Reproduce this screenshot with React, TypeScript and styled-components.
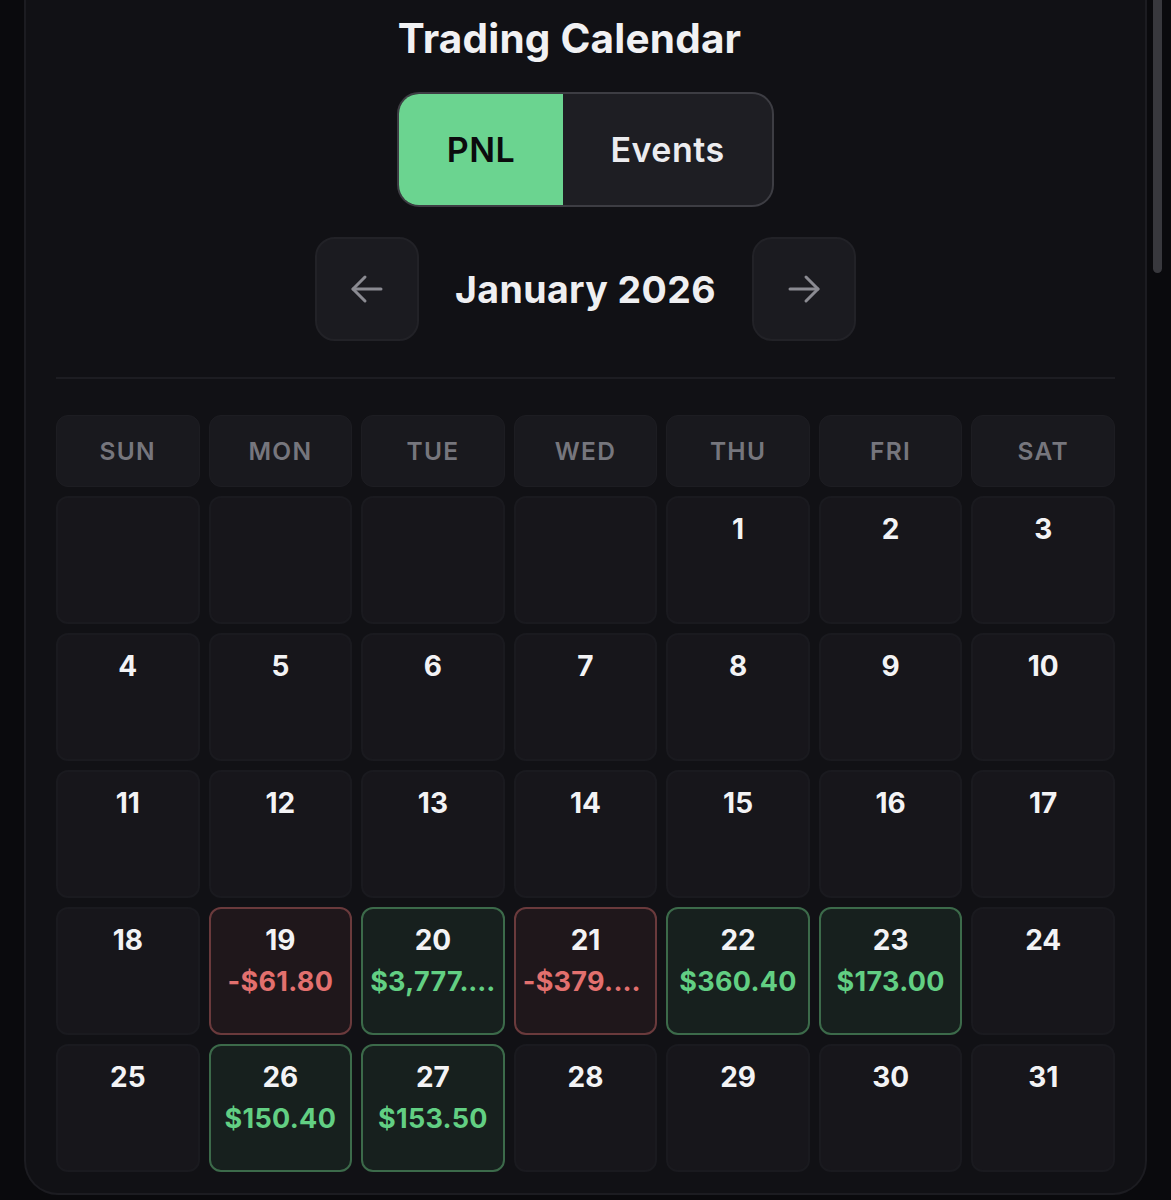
import React from "react"
import styled, {createGlobalStyle} from "styled-components"

const GlobalStyle = createGlobalStyle`
  html, body {
    margin: 0;
    padding: 0;
    background: #0a0a0d;
    font-family: Inter, "Noto Sans", sans-serif;
    -webkit-font-smoothing: antialiased;
  }
`

type Tone = "none" | "gain" | "loss"

type Day = {
  day?: number
  pnl?: string
  tone?: Tone
}

const weekdays = ["SUN", "MON", "TUE", "WED", "THU", "FRI", "SAT"]

const pnlByDay: Record<number, {pnl: string; tone: Tone}> = {
  19: {pnl: "-$61.80", tone: "loss"},
  20: {pnl: "$3,777.60", tone: "gain"},
  21: {pnl: "-$379.20", tone: "loss"},
  22: {pnl: "$360.40", tone: "gain"},
  23: {pnl: "$173.00", tone: "gain"},
  26: {pnl: "$150.40", tone: "gain"},
  27: {pnl: "$153.50", tone: "gain"},
}

const buildDays = (): Day[] => {
  const days: Day[] = [{}, {}, {}, {}]
  for (let d = 1; d <= 31; d++) {
    const entry = pnlByDay[d]
    days.push({day: d, pnl: entry?.pnl, tone: entry?.tone ?? "none"})
  }
  return days
}

const Page = styled.div`
  position: relative;
  min-height: 1200px;
  padding: 0 24px;
  box-sizing: border-box;
  overflow: hidden;
`

const Card = styled.div`
  width: 1123px;
  box-sizing: border-box;
  background: #111115;
  border: 2px solid #1c1c21;
  border-top: none;
  border-radius: 0 0 34px 34px;
  padding: 14px 30px 21px;
  display: flex;
  flex-direction: column;
  align-items: center;
`

const Title = styled.h1`
  margin: 0 32px 0 0;
  font-size: 40.5px;
  line-height: 50px;
  font-weight: 700;
  color: #f1f1f3;
  letter-spacing: 0.2px;
`

const Toggle = styled.div`
  margin-top: 28px;
  display: flex;
  height: 115px;
  box-sizing: border-box;
  border: 2px solid #3d3d43;
  border-radius: 22px;
  overflow: hidden;
  background: #1e1e23;
`

const ToggleOption = styled.button<{$active?: boolean; $width: number}>`
  width: ${(p) => p.$width}px;
  border: none;
  margin: 0;
  padding: 0;
  font-family: inherit;
  font-size: 34px;
  font-weight: 600;
  letter-spacing: 0.5px;
  color: ${(p) => (p.$active ? "#0b0b0d" : "#ececef")};
  background: ${(p) => (p.$active ? "#6bd490" : "transparent")};
  cursor: pointer;
`

const Nav = styled.div`
  margin-top: 30px;
  display: flex;
  align-items: center;
  gap: 36px;
`

const NavButton = styled.button`
  width: 104px;
  height: 104px;
  box-sizing: border-box;
  border-radius: 20px;
  border: 2px solid #222227;
  background: #1b1b20;
  display: flex;
  align-items: center;
  justify-content: center;
  color: #8b8b92;
  padding: 0;
  cursor: pointer;
`

const Month = styled.div`
  font-size: 37.5px;
  font-weight: 700;
  color: #efeff1;
  letter-spacing: 0.4px;
  min-width: 260px;
  text-align: center;
`

const Divider = styled.div`
  align-self: stretch;
  height: 2px;
  background: #1d1d22;
  margin: 36px 0 36px;
`

const Grid = styled.div`
  align-self: stretch;
  display: grid;
  grid-template-columns: repeat(7, 1fr);
  grid-auto-rows: 128px;
  grid-template-rows: 72px;
  gap: 9px;
`

const Weekday = styled.div`
  background: #19191e;
  border: 1px solid #1d1d22;
  border-radius: 12px;
  display: flex;
  align-items: center;
  justify-content: center;
  font-size: 24.5px;
  font-weight: 600;
  letter-spacing: 1.3px;
  color: #76767d;
`

const toneStyles: Record<Tone, {bg: string; border: string}> = {
  none: {bg: "#17161b", border: "#1a1a1f"},
  gain: {bg: "#17201e", border: "#3c6a4a"},
  loss: {bg: "#1f171b", border: "#6a3a3c"},
}

const Cell = styled.div<{$tone: Tone}>`
  box-sizing: border-box;
  background: ${(p) => toneStyles[p.$tone].bg};
  border: 2px solid ${(p) => toneStyles[p.$tone].border};
  border-radius: 12px;
  padding: 14px 7px 0;
  display: flex;
  flex-direction: column;
  align-items: center;
  min-width: 0;
`

const DayNumber = styled.div`
  font-size: 28px;
  line-height: 34px;
  font-weight: 700;
  color: #f3f3f5;
`

const Pnl = styled.div<{$tone: Tone}>`
  margin-top: 8px;
  font-size: 27px;
  line-height: 34px;
  font-weight: 700;
  letter-spacing: 0.3px;
  color: ${(p) => (p.$tone === "loss" ? "#e2706e" : "#62cf83")};
  max-width: 100%;
  white-space: nowrap;
  overflow: hidden;
  text-overflow: ellipsis;
`

const ScrollThumb = styled.div`
  position: absolute;
  top: 0;
  left: 1153px;
  width: 9px;
  height: 273px;
  border-radius: 0 0 5px 5px;
  background: #38383d;
`

const Arrow = ({dir}: {dir: "left" | "right"}) => (
  <svg
    width="34"
    height="30"
    viewBox="0 0 34 30"
    fill="none"
    stroke="currentColor"
    strokeWidth="3"
    strokeLinecap="round"
    strokeLinejoin="round"
    style={dir === "right" ? {transform: "scaleX(-1)"} : undefined}
  >
    <path d="M31 15H3" />
    <path d="M15 3L3 15l12 12" />
  </svg>
)

export default function App() {
  const days = buildDays()
  return (
    <Page>
      <GlobalStyle />
      <Card>
        <Title>Trading Calendar</Title>
        <Toggle>
          <ToggleOption $active $width={164}>PNL</ToggleOption>
          <ToggleOption $width={209}>Events</ToggleOption>
        </Toggle>
        <Nav>
          <NavButton aria-label="Previous month">
            <Arrow dir="left" />
          </NavButton>
          <Month>January 2026</Month>
          <NavButton aria-label="Next month">
            <Arrow dir="right" />
          </NavButton>
        </Nav>
        <Divider />
        <Grid>
          {weekdays.map((w) => (
            <Weekday key={w}>{w}</Weekday>
          ))}
          {days.map((d, i) => (
            <Cell key={i} $tone={d.tone ?? "none"}>
              {d.day && <DayNumber>{d.day}</DayNumber>}
              {d.pnl && <Pnl $tone={d.tone ?? "none"}>{d.pnl}</Pnl>}
            </Cell>
          ))}
        </Grid>
      </Card>
      <ScrollThumb />
    </Page>
  )
}
